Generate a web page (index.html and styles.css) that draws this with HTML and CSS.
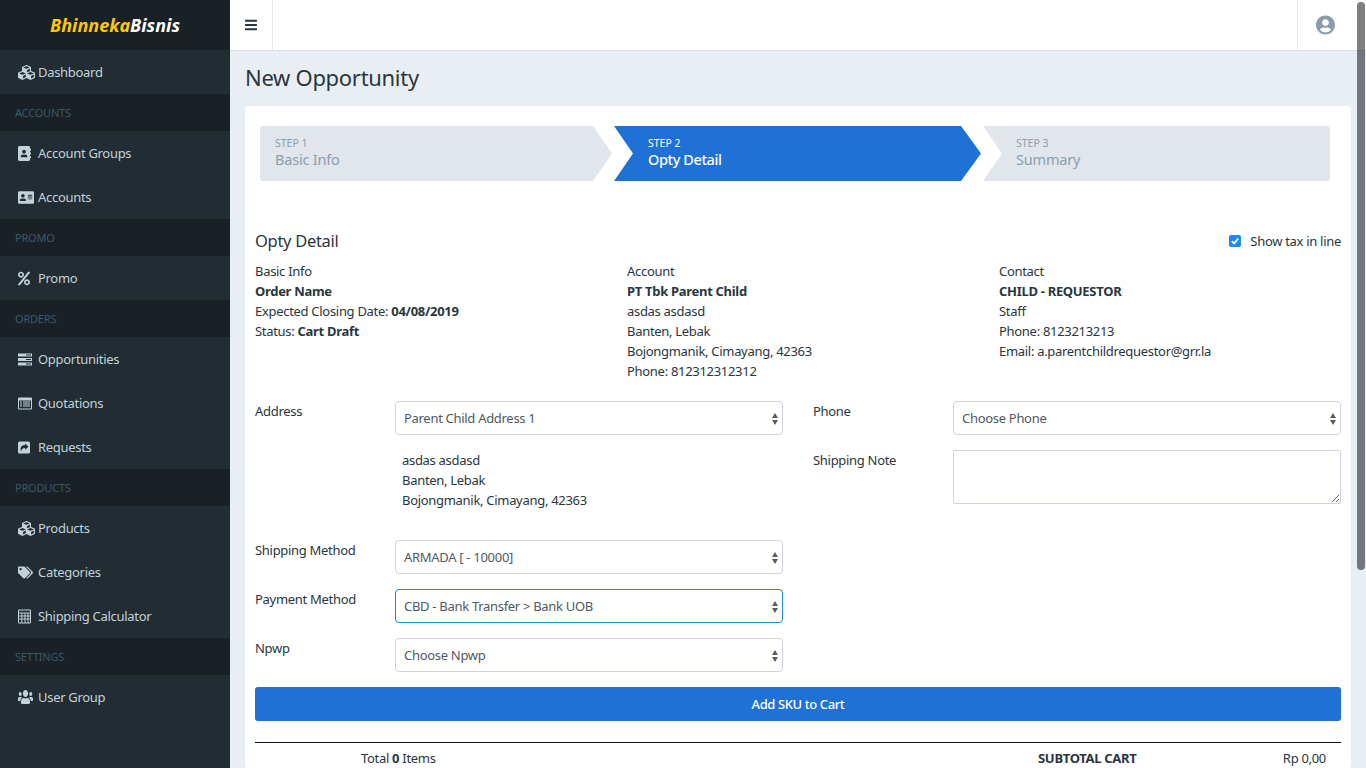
FILE: index.html
```html
<!DOCTYPE html>
<html>

<head>
    <title>New Opportunity</title>
    <link rel="stylesheet" href="styles.css">
</head>

<body>
    <svg class="icon-defs" width="0" height="0">
        <symbol id="i-cubes" viewBox="0 0 512 512"><path d="M488.6 250.2L392 214V105.5c0-15-9.3-28.4-23.4-33.7l-100-37.5c-8.1-3.1-17.1-3.1-25.3 0l-100 37.5c-14.1 5.3-23.4 18.7-23.4 33.7V214l-96.6 36.2C9.3 255.5 0 268.9 0 283.9V394c0 13.6 7.7 26.1 19.9 32.2l100 50c10.1 5.1 22.1 5.1 32.2 0l103.9-52 103.9 52c10.1 5.1 22.1 5.1 32.2 0l100-50c12.2-6.1 19.9-18.6 19.9-32.2V283.9c0-15-9.3-28.4-23.4-33.7zM358 214.8l-85 31.9v-68.2l85-37v73.3zM154 104.1l102-38.2 102 38.2v.6l-102 41.4-102-41.4v-.6zm84 291.1l-85 42.5v-79.1l85-38.8v75.4zm0-112l-102 41.4-102-41.4v-.6l102-38.2 102 38.2v.6zm240 112l-85 42.5v-79.1l85-38.8v75.4zm0-112l-102 41.4-102-41.4v-.6l102-38.2 102 38.2v.6z"/></symbol>
        <symbol id="i-book" viewBox="0 0 448 512"><path d="M436 160c6.6 0 12-5.4 12-12v-40c0-6.6-5.4-12-12-12h-20V48c0-26.5-21.5-48-48-48H48C21.5 0 0 21.5 0 48v416c0 26.5 21.5 48 48 48h320c26.5 0 48-21.5 48-48v-48h20c6.6 0 12-5.4 12-12v-40c0-6.6-5.4-12-12-12h-20v-64h20c6.6 0 12-5.4 12-12v-40c0-6.6-5.4-12-12-12h-20v-64h20zm-228-32c35.3 0 64 28.7 64 64s-28.7 64-64 64-64-28.7-64-64 28.7-64 64-64zm112 236.8c0 10.6-10 19.2-22.4 19.2H118.4C106 384 96 375.4 96 364.8v-19.2c0-31.8 30.1-57.6 67.2-57.6h5c12.3 5.1 25.7 8 39.8 8s27.6-2.9 39.8-8h5c37.1 0 67.2 25.8 67.2 57.6v19.2z"/></symbol>
        <symbol id="i-card" viewBox="0 0 576 512"><path d="M528 32H48C21.5 32 0 53.5 0 80v352c0 26.5 21.5 48 48 48h480c26.5 0 48-21.5 48-48V80c0-26.5-21.5-48-48-48zm-352 96c35.3 0 64 28.7 64 64s-28.7 64-64 64-64-28.7-64-64 28.7-64 64-64zm112 236.8c0 10.6-10 19.2-22.4 19.2H86.4C74 384 64 375.4 64 364.8v-19.2c0-31.8 30.1-57.6 67.2-57.6h5c12.3 5.1 25.7 8 39.8 8s27.6-2.9 39.8-8h5c37.1 0 67.2 25.8 67.2 57.6v19.2zM512 312c0 4.4-3.6 8-8 8H360c-4.4 0-8-3.6-8-8v-16c0-4.4 3.6-8 8-8h144c4.4 0 8 3.6 8 8v16zm0-64c0 4.4-3.6 8-8 8H360c-4.4 0-8-3.6-8-8v-16c0-4.4 3.6-8 8-8h144c4.4 0 8 3.6 8 8v16zm0-64c0 4.4-3.6 8-8 8H360c-4.4 0-8-3.6-8-8v-16c0-4.4 3.6-8 8-8h144c4.4 0 8 3.6 8 8v16z"/></symbol>
        <symbol id="i-percent" viewBox="0 0 448 512"><path d="M112 224c61.9 0 112-50.1 112-112S173.9 0 112 0 0 50.1 0 112s50.1 112 112 112zm0-160c26.5 0 48 21.5 48 48s-21.5 48-48 48-48-21.5-48-48 21.5-48 48-48zm224 224c-61.9 0-112 50.1-112 112s50.1 112 112 112 112-50.1 112-112-50.1-112-112-112zm0 160c-26.5 0-48-21.5-48-48s21.5-48 48-48 48 21.5 48 48-21.5 48-48 48zM392.3.2l31.6.1c19.4.1 30.8 21.8 19.8 37.8L77.4 501.6a23.95 23.95 0 0 1-19.8 10.4l-33.4-.1c-19.5 0-30.9-21.9-19.7-37.8l368-463.7C377.2 5.6 384.5.2 392.3.2z"/></symbol>
        <symbol id="i-rows" viewBox="0 0 14 12"><path d="M0 0h14v3H0zM0 4.5h14v3H0zM0 9h14v3H0z"/><path class="cut" d="M8 1h5v1H8zM8 5.5h5v1H8zM8 10h5v1H8z"/></symbol>
        <symbol id="i-list" viewBox="0 0 14 12"><path fill-rule="evenodd" d="M1 0h12a1 1 0 0 1 1 1v10a1 1 0 0 1-1 1H1a1 1 0 0 1-1-1V1a1 1 0 0 1 1-1zM1 3v8h12V3zM2 4h2v1H2zM5 4h7v1H5zM2 6h2v1H2zM5 6h7v1H5zM2 8h2v1H2zM5 8h7v1H5z"/></symbol>
        <symbol id="i-share" viewBox="0 0 12 12"><path fill-rule="evenodd" d="M1.5 0h9A1.5 1.5 0 0 1 12 1.500v9a1.500 1.500 0 0 1-1.500 1.500h-9A1.500 1.500 0 0 1 0 10.500v-9A1.500 1.500 0 0 1 1.500 0zM7 2v1.600C4.500 3.700 2.500 5 2.500 7.500c0 1 .4 1.800 1 2.500-.4-2.200 1-3.400 3.500-3.400V8.300L10.500 5.200z"/></symbol>
        <symbol id="i-tags" viewBox="0 0 640 512"><path d="M497.941 225.941L286.059 14.059A48 48 0 0 0 252.118 0H48C21.49 0 0 21.49 0 48v204.118a48 48 0 0 0 14.059 33.941l211.882 211.882c18.744 18.745 49.136 18.746 67.882 0l204.118-204.118c18.745-18.745 18.745-49.137 0-67.882zM112 160c-26.51 0-48-21.49-48-48s21.49-48 48-48 48 21.49 48 48-21.49 48-48 48zm513.941 133.823L421.823 497.941c-18.745 18.745-49.137 18.745-67.882 0l-.36-.36L527.64 323.522c16.999-16.999 26.36-39.6 26.36-63.64s-9.362-46.641-26.36-63.64L331.397 0h48.721a48 48 0 0 1 33.941 14.059l211.882 211.882c18.745 18.745 18.745 49.137 0 67.882z"/></symbol>
        <symbol id="i-calc" viewBox="0 0 13 14"><path fill-rule="evenodd" d="M1 0h11a1 1 0 0 1 1 1v12a1 1 0 0 1-1 1H1a1 1 0 0 1-1-1V1a1 1 0 0 1 1-1zM1 1v2h11V1zM1 4v2h2.300V4zM4.300 4v2h2.200V4zM7.500 4v2h2V4zM10.500 4v2H12V4zM1 7v2h2.300V7zM4.300 7v2h2.200V7zM7.500 7v2h2V7zM10.500 7v2H12V7zM1 10v3h2.300v-3zM4.300 10v3h2.200v-3zM7.500 10v3h2v-3zM10.500 10v3H12v-3z"/></symbol>
        <symbol id="i-users" viewBox="0 32 640 448" preserveAspectRatio="none"><path d="M96 224c35.3 0 64-28.7 64-64s-28.7-64-64-64-64 28.7-64 64 28.7 64 64 64zm448 0c35.3 0 64-28.7 64-64s-28.7-64-64-64-64 28.700-64 64 28.700 64 64 64zm32 32h-64c-17.600 0-33.500 7.100-45.100 18.600 40.300 22.100 68.900 62 75.100 109.400h66c17.700 0 32-14.300 32-32v-32c0-35.300-28.700-64-64-64zm-256 0c61.900 0 112-50.100 112-112S381.900 32 320 32 208 82.100 208 144s50.100 112 112 112zm76.800 32h-8.300c-20.800 10-43.900 16-68.500 16s-47.600-6-68.500-16h-8.300C179.600 288 128 339.600 128 403.200V432c0 26.500 21.500 48 48 48h288c26.500 0 48-21.500 48-48v-28.800c0-63.600-51.600-115.200-115.200-115.200zm-223.700-13.400C161.500 263.100 145.600 256 128 256H64c-35.300 0-64 28.700-64 64v32c0 17.700 14.300 32 32 32h65.900c6.300-47.400 34.900-87.300 75.200-109.400z"/></symbol>
    </svg>

    <div class="app">
        <aside class="sidebar">
            <div class="brand"><span class="brand-a">Bhinneka</span>Bisnis</div>
            <nav class="nav">
                <a class="nav-item"><svg class="nav-icon w17"><use href="#i-cubes"/></svg>Dashboard</a>
                <div class="nav-title">ACCOUNTS</div>
                <a class="nav-item"><svg class="nav-icon w13"><use href="#i-book"/></svg>Account Groups</a>
                <a class="nav-item"><svg class="nav-icon w16"><use href="#i-card"/></svg>Accounts</a>
                <div class="nav-title">PROMO</div>
                <a class="nav-item"><svg class="nav-icon w12"><use href="#i-percent"/></svg>Promo</a>
                <div class="nav-title">ORDERS</div>
                <a class="nav-item"><svg class="nav-icon w14"><use href="#i-rows"/></svg>Opportunities</a>
                <a class="nav-item"><svg class="nav-icon w14"><use href="#i-list"/></svg>Quotations</a>
                <a class="nav-item"><svg class="nav-icon w12"><use href="#i-share"/></svg>Requests</a>
                <div class="nav-title">PRODUCTS</div>
                <a class="nav-item"><svg class="nav-icon w17"><use href="#i-cubes"/></svg>Products</a>
                <a class="nav-item"><svg class="nav-icon w15"><use href="#i-tags"/></svg>Categories</a>
                <a class="nav-item"><svg class="nav-icon w13"><use href="#i-calc"/></svg>Shipping Calculator</a>
                <div class="nav-title">SETTINGS</div>
                <a class="nav-item"><svg class="nav-icon w15 h14"><use href="#i-users"/></svg>User Group</a>
            </nav>
        </aside>

        <div class="main">
            <header class="topbar">
                <div class="toggler">
                    <svg class="bars" viewBox="0 0 448 512"><path d="M16 132h416c8.837 0 16-7.163 16-16V76c0-8.837-7.163-16-16-16H16C7.163 60 0 67.163 0 76v40c0 8.837 7.163 16 16 16zm0 160h416c8.837 0 16-7.163 16-16v-40c0-8.837-7.163-16-16-16H16c-8.837 0-16 7.163-16 16v40c0 8.837 7.163 16 16 16zm0 160h416c8.837 0 16-7.163 16-16v-40c0-8.837-7.163-16-16-16H16c-8.837 0-16 7.163-16 16v40c0 8.837 7.163 16 16 16z"/></svg>
                </div>
                <div class="user">
                    <svg class="avatar" viewBox="0 0 496 512"><path d="M248 8C111 8 0 119 0 256s111 248 248 248 248-111 248-248S385 8 248 8zm0 96c48.600 0 88 39.400 88 88s-39.400 88-88 88-88-39.400-88-88 39.400-88 88-88zm0 344c-58.700 0-111.300-26.600-146.500-68.200 18.800-35.400 55.600-59.800 98.500-59.800 2.400 0 4.800.4 7.100 1.100 13 4.200 26.600 6.900 40.900 6.900 14.300 0 28-2.700 40.900-6.900 2.300-.7 4.700-1.100 7.100-1.100 42.900 0 79.700 24.400 98.500 59.800C359.300 421.400 306.700 448 248 448z"/></svg>
                </div>
            </header>

            <main class="content">
                <h1 class="page-title">New Opportunity</h1>
                <section class="card">
                    <div class="steps">
                        <div class="step step-first">
                            <span class="step-no">STEP 1</span>
                            <span class="step-name">Basic Info</span>
                        </div>
                        <div class="step step-active">
                            <span class="step-no">STEP 2</span>
                            <span class="step-name">Opty Detail</span>
                        </div>
                        <div class="step step-last">
                            <span class="step-no">STEP 3</span>
                            <span class="step-name">Summary</span>
                        </div>
                    </div>

                    <div class="detail-head">
                        <h2 class="detail-title">Opty Detail</h2>
                        <label class="tax-check"><span class="checkbox"><svg viewBox="0 0 12 12"><path d="M2.800 6.200l2.300 2.300 4.100-4.800" fill="none" stroke="#fff" stroke-width="1.800"/></svg></span>Show tax in line</label>
                    </div>

                    <div class="info">
                        <div>
                            <div>Basic Info</div>
                            <div><b>Order Name</b></div>
                            <div>Expected Closing Date: <b>04/08/2019</b></div>
                            <div>Status: <b>Cart Draft</b></div>
                        </div>
                        <div>
                            <div>Account</div>
                            <div><b>PT Tbk Parent Child</b></div>
                            <div>asdas asdasd</div>
                            <div>Banten, Lebak</div>
                            <div>Bojongmanik, Cimayang, 42363</div>
                            <div>Phone: 812312312312</div>
                        </div>
                        <div>
                            <div>Contact</div>
                            <div><b>CHILD - REQUESTOR</b></div>
                            <div>Staff</div>
                            <div>Phone: 8123213213</div>
                            <div>Email: a.parentchildrequestor@grr.la</div>
                        </div>
                    </div>

                    <div class="form">
                        <div class="form-col">
                            <div class="field">
                                <label class="field-label">Address</label>
                                <div class="select-wrap"><select><option>Parent Child Address 1</option></select></div>
                            </div>
                            <div class="address">
                                <div>asdas asdasd</div>
                                <div>Banten, Lebak</div>
                                <div>Bojongmanik, Cimayang, 42363</div>
                            </div>
                            <div class="field">
                                <label class="field-label">Shipping Method</label>
                                <div class="select-wrap"><select><option>ARMADA [ - 10000]</option></select></div>
                            </div>
                            <div class="field">
                                <label class="field-label">Payment Method</label>
                                <div class="select-wrap"><select class="is-focus"><option>CBD - Bank Transfer &gt; Bank UOB</option></select></div>
                            </div>
                            <div class="field">
                                <label class="field-label">Npwp</label>
                                <div class="select-wrap"><select><option>Choose Npwp</option></select></div>
                            </div>
                        </div>
                        <div class="form-col">
                            <div class="field">
                                <label class="field-label">Phone</label>
                                <div class="select-wrap"><select><option>Choose Phone</option></select></div>
                            </div>
                            <div class="field">
                                <label class="field-label">Shipping Note</label>
                                <textarea class="note"></textarea>
                            </div>
                        </div>
                    </div>

                    <button class="add-btn">Add SKU to Cart</button>

                    <div class="totals">
                        <div class="total-items">Total <b>0</b> Items</div>
                        <div class="total-label">SUBTOTAL CART</div>
                        <div class="total-value">Rp 0,00</div>
                    </div>
                </section>
            </main>
        </div>
    </div>

    <div class="scroll-thumb"></div>
</body>

</html>
```

FILE: styles.css
```css
html,
body {
    margin: 0;
    padding: 0;
    height: 768px;
    overflow: hidden;
}

body {
    font-family: "Noto Sans", sans-serif;
    font-size: 13px;
    line-height: 20px;
    letter-spacing: -0.3px;
    color: #29363d;
    background-color: #e9eef5;
}

.icon-defs {
    position: absolute;
}

.app {
    display: flex;
    height: 768px;
}

/* sidebar */
.sidebar {
    width: 230px;
    flex: none;
    background-color: #212c33;
}

.brand {
    height: 50px;
    background-color: #192127;
    color: #fff;
    font-size: 18px;
    font-weight: 700;
    font-style: italic;
    letter-spacing: 0;
    display: flex;
    align-items: center;
    justify-content: center;
}

.brand-a {
    color: #ffc800;
}

.nav-item {
    display: flex;
    align-items: center;
    height: 44px;
    padding-left: 18px;
    color: #c3d2da;
}

.nav-icon {
    height: 17px;
    fill: #c3d2da;
}

.w12 { width: 12px; margin-right: 8px; }
.w13 { width: 13px; margin-right: 7px; }
.w14 { width: 14px; margin-right: 6px; }
.w15 { width: 15px; margin-right: 5px; }
.w16 { width: 16px; margin-right: 4px; }
.w17 { width: 17px; margin-right: 3px; }
.h14 { height: 14px; }

.cut {
    fill: #212c33;
}

.nav-title {
    height: 37px;
    line-height: 37px;
    padding-left: 15px;
    font-size: 11px;
    letter-spacing: -0.2px;
    background-color: #192127;
    color: #3d5866;
}

/* top */
.main {
    flex: 1;
    min-width: 0;
}

.topbar {
    display: flex;
    justify-content: space-between;
    height: 51px;
    background-color: #fff;
    border-bottom: 1px solid #dde2e8;
    box-sizing: border-box;
}

.toggler {
    width: 42px;
    border-right: 1px solid #e6e9ed;
    display: flex;
    align-items: center;
    justify-content: center;
}

.bars {
    width: 12px;
    height: 14px;
    fill: #29363d;
}

.user {
    width: 69px;
    border-left: 1px solid #e6e9ed;
    display: flex;
    align-items: center;
    justify-content: center;
    padding-right: 13px;
    box-sizing: border-box;
}

.avatar {
    width: 19px;
    height: 20px;
    fill: #8b9dab;
}

/* content */
.content {
    padding: 0 15px;
}

.page-title {
    margin: 0;
    height: 55px;
    line-height: 52px;
    font-size: 22px;
    font-weight: 400;
}

.card {
    background-color: #fff;
    border-radius: 3px;
    padding: 20px 10px 0;
}

.steps {
    display: flex;
    gap: 2px;
    margin: 0 11px 0 5px;
}

.step {
    height: 55px;
    box-sizing: border-box;
    display: flex;
    flex-direction: column;
    justify-content: center;
    background-color: #e0e6ec;
    color: #8d9dab;
    padding-left: 33px;
    padding-bottom: 2px;
}

.step-first {
    width: 352px;
    padding-left: 15px;
    border-radius: 3px 0 0 3px;
    clip-path: polygon(0 0, calc(100% - 19px) 0, 100% 50%, calc(100% - 19px) 100%, 0 100%);
}

.step-active {
    width: 367px;
    padding-left: 34px;
    background-color: #2071d5;
    color: #fff;
    clip-path: polygon(0 0, calc(100% - 20px) 0, 100% 50%, calc(100% - 20px) 100%, 0 100%, 19px 50%);
}

.step-last {
    flex: 1;
    border-radius: 0 3px 3px 0;
    clip-path: polygon(0 0, 100% 0, 100% 100%, 0 100%, 19px 50%);
}

.step-no {
    font-size: 10.500px;
    line-height: 14px;
    letter-spacing: 0;
}

.step-name {
    font-size: 14.500px;
    line-height: 19px;
    letter-spacing: -0.2px;
}

.step-active .step-name {
    font-weight: 500;
    letter-spacing: -0.4px;
}

.detail-head {
    display: flex;
    justify-content: space-between;
    align-items: center;
    margin-top: 48px;
    height: 24px;
}

.detail-title {
    margin: 0;
    font-size: 16.500px;
    font-weight: 400;
}

.tax-check {
    display: flex;
    align-items: center;
}

.checkbox {
    width: 12px;
    height: 12px;
    border-radius: 2px;
    background-color: #1e88f5;
    margin-right: 9px;
    display: flex;
}

.info {
    display: grid;
    grid-template-columns: repeat(3, 372px);
    margin-top: 8px;
}

.info b,
.total-items b,
.total-label {
    font-weight: 700;
}

.form {
    display: grid;
    grid-template-columns: 528px 528px;
    gap: 30px;
    margin-top: 20px;
}

.field {
    display: flex;
    margin-bottom: 15px;
}

.field-label {
    width: 140px;
    flex: none;
    padding-top: 0;
}

.select-wrap {
    flex: 1;
    position: relative;
}

.select-wrap::before,
.select-wrap::after {
    content: "";
    position: absolute;
    right: 5px;
    border-left: 3.500px solid transparent;
    border-right: 3.500px solid transparent;
    pointer-events: none;
}

.select-wrap::before {
    top: 12px;
    border-bottom: 5.500px solid #5c5c5c;
}

.select-wrap::after {
    top: 19px;
    border-top: 5.500px solid #5c5c5c;
}

select {
    display: block;
    width: 100%;
    height: 34px;
    appearance: none;
    -webkit-appearance: none;
    background-color: #fff;
    border: 1px solid #d0d3e0;
    border-radius: 4px;
    padding: 0 8px;
    font-family: inherit;
    font-size: 13px;
    letter-spacing: inherit;
    color: #4f5a62;
}

.is-focus {
    border-color: #1f8bc9;
}

.address {
    padding-left: 147px;
    margin: 0 0 30px;
}

.note {
    flex: 1;
    height: 54px;
    box-sizing: border-box;
    border: 1px solid #d0d3e0;
    border-radius: 2px;
    padding: 6px 8px;
    margin: 0;
    font-family: inherit;
}

.add-btn {
    display: block;
    width: 100%;
    height: 34px;
    border: 0;
    border-radius: 3px;
    background-color: #2071d5;
    color: #fff;
    font-family: inherit;
    font-size: 13px;
    font-weight: 500;
    letter-spacing: -0.4px;
    padding: 0;
}

.totals {
    display: flex;
    margin-top: 21px;
    padding: 5px 15px 0 106px;
    border-top: 1px solid #111;
}

.total-items {
    width: 677px;
}

.total-label {
    flex: 1;
}

/* overlay scrollbar */
.scroll-thumb {
    position: absolute;
    top: 2px;
    right: 1px;
    width: 8px;
    height: 568px;
    border-radius: 4px;
    background-color: rgba(0, 0, 0, 0.5);
}
```
